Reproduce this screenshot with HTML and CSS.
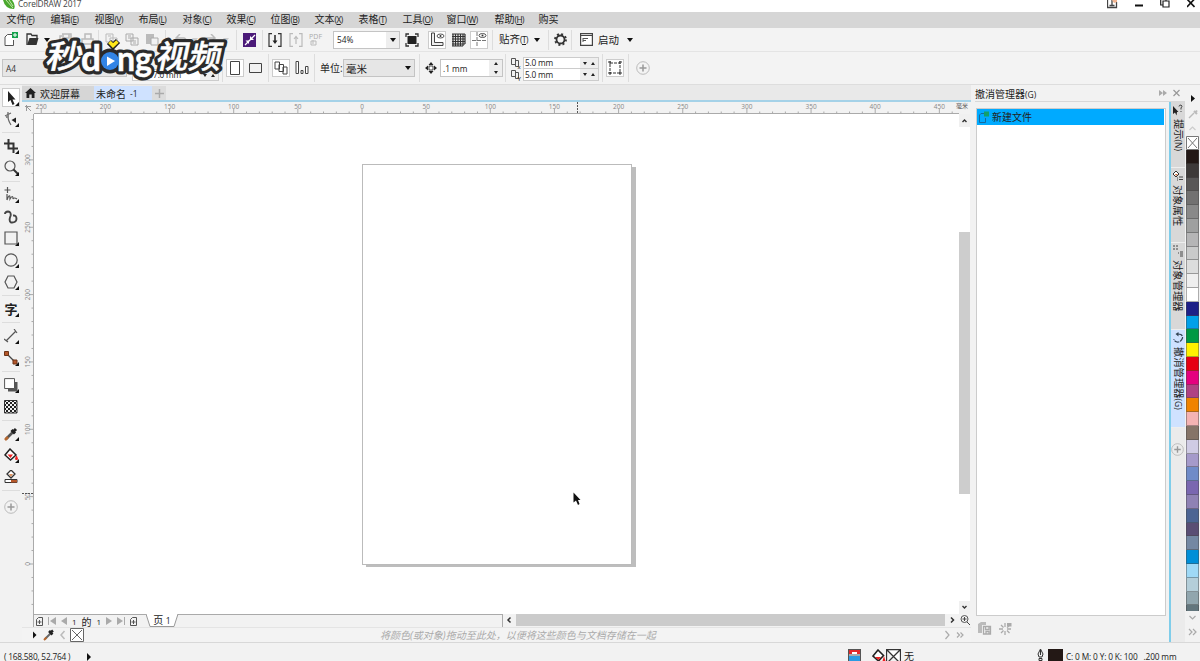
FILE: index.html
```
<!DOCTYPE html>
<html lang="zh-CN">
<head>
  <meta charset="UTF-8">
  <meta name="viewport" content="width=device-width, initial-scale=1.0">
  <title>CorelDRAW 2017</title>
  <link rel="stylesheet" href="styles.css">
</head>
<body>
  <div id="app">
    <header class="titlebar">
      <svg class="leaf" width="13" height="10" viewBox="0 0 13 10"><path d="M1 0H10Q14 5 12 9Q3 9 1 0Z" fill="#4aa82e"/><path d="M4 0L11 8M7 0L11 6" stroke="#c5e6a8" fill="none"/></svg>
      <span>CorelDRAW 2017</span>
      <div class="winbtns">
        <svg width="11" height="9" viewBox="0 0 11 9"><path d="M.5 0V7.5H9.5V2M5 0V5M2.5 5.5H7.5" fill="none" stroke="#444" stroke-width="1.3"/><path d="M5 0H10V2L7 3Z" fill="#f2b48f"/></svg>
        <svg width="8" height="9" viewBox="0 0 8 9"><path d="M0 5.5H8" stroke="#111" stroke-width="2"/></svg>
        <svg width="10" height="9" viewBox="0 0 10 9"><path d="M3 1H9V7H3ZM3 5H.7V0M6 1V0" fill="none" stroke="#222" stroke-width="1.2"/></svg>
        <svg width="8" height="9" viewBox="0 0 8 9"><path d="M0 7L7.5 -1M0 -1L7.5 7" stroke="#111" stroke-width="1.6"/></svg>
      </div>
    </header>

    <nav class="menubar">
      <a>文件<i>(<u>F</u>)</i></a><a>编辑<i>(<u>E</u>)</i></a><a>视图<i>(<u>V</u>)</i></a><a>布局<i>(<u>L</u>)</i></a><a>对象<i>(<u>C</u>)</i></a><a>效果<i>(<u>C</u>)</i></a><a>位图<i>(<u>B</u>)</i></a><a>文本<i>(<u>X</u>)</i></a><a>表格<i>(<u>T</u>)</i></a><a>工具<i>(<u>O</u>)</i></a><a class="wide">窗口<i>(<u>W</u>)</i></a><a>帮助<i>(<u>H</u>)</i></a><a>购买</a>
    </nav>

    <div class="toolbar standard">
      <svg width="15" height="15" viewBox="0 0 15 15"><path d="M8 2.5H3.5L1 5V13.5H9.5V8" fill="#fff" stroke="#555"/><path d="M8 0H14V6H8Z" fill="#13a04b"/><path d="M11 1V5M9 3H13" stroke="#fff"/></svg>
      <svg width="13" height="13" viewBox="0 0 13 13"><path d="M1 12V1H5L6 2.5H11V5" fill="none" stroke="#333" stroke-width="1.3"/><path d="M1 12L3.5 5H12.5L10.5 12Z" fill="#333"/></svg>
      <b class="caret"></b>
      <svg width="13" height="13" viewBox="0 0 13 13"><path d="M3 1H12V10H1V3H3M4 1V5H10V1" fill="none" stroke="#bbb" stroke-width="1.5"/></svg>
      <svg width="13" height="13" viewBox="0 0 13 13"><path d="M4 6V1H10V6M1 11V6H12V11Z" fill="none" stroke="#bbb" stroke-width="1.5"/></svg>
      <em class="sep"></em>
      <svg width="13" height="13" viewBox="0 0 13 13"><path d="M1 1H8V9H1ZM5 5H12V12H5Z" fill="#f2f2f2" stroke="#bbb"/><path d="M3 3H6M7 8H10" stroke="#bbb"/></svg>
      <svg width="14" height="13" viewBox="0 0 14 13"><path d="M1 1H8V8H1ZM6 5H13V12H6Z" fill="#f2f2f2" stroke="#aaa"/><path d="M3 3H6M3 5H6M8 8H11M8 10H11" stroke="#aaa"/></svg>
      <svg width="14" height="13" viewBox="0 0 14 13"><path d="M1 1H9V11H1Z" fill="#bbb"/><path d="M6 5H13V12H6Z" fill="#f2f2f2" stroke="#aaa"/></svg>
      <em class="sep"></em>
      <svg width="13" height="11" viewBox="0 0 13 11"><path d="M5 0L1 4L5 7M1 4H9Q12 5 11 10" fill="none" stroke="#bbb" stroke-width="1.5"/></svg>
      <b class="caret light"></b>
      <svg width="13" height="11" viewBox="0 0 13 11"><path d="M8 0L12 4L8 7M12 4H4Q1 5 2 10" fill="none" stroke="#bbb" stroke-width="1.5"/></svg>
      <b class="caret light"></b>
      <em class="sep"></em>
      <svg width="13" height="14" viewBox="0 0 13 14"><path d="M0 0H13V14H0Z" fill="#4b1a78"/><path d="M2 12L12 2" stroke="#fff" stroke-width="1.3"/><path d="M7 3V7H11ZM6 7.500H2.500L6 11Z" fill="#fff"/></svg>
      <em class="sep"></em>
      <svg width="14" height="14" viewBox="0 0 14 14"><path d="M4 .7H1V13.300H4M10 .7H13V13.300H10" fill="none" stroke="#333" stroke-width="1.200"/><path d="M7 2V9" stroke="#222" stroke-width="1.500"/><path d="M4.500 7.500H9.500L7 11Z" fill="#222"/></svg>
      <svg width="14" height="14" viewBox="0 0 14 14"><path d="M4 .7H1V13.300H4M10 .7H13V13.300H10M7 11V4M5 6L7 3.500L9 6" fill="none" stroke="#bbb" stroke-width="1.200"/></svg>
      <svg width="14" height="15" viewBox="0 0 14 15"><text x="0" y="7" font-size="7" fill="#aaa" textLength="13">PDF</text><path d="M2 9H7V13H2ZM4 8V12" fill="none" stroke="#bbb"/></svg>
      <div class="combo zoom"><span>54%</span><b class="caret"></b></div>
      <svg width="14" height="14" viewBox="0 0 14 14"><path d="M2.500 3H11.500V11H2.500Z" fill="#222"/><path d="M1 4V1H4M10 1H13V4M13 10V13H10M4 13H1V10" fill="none" stroke="#333" stroke-width="1.300"/></svg>
      <div class="btn"><svg width="15" height="15" viewBox="0 0 15 15"><path d="M1.500 1H4.500V10.500H13V13.500H1.500Z" fill="#eee" stroke="#444"/><ellipse cx="10.500" cy="4" rx="3.500" ry="2" fill="none" stroke="#555"/><circle cx="10.500" cy="4" r="1" fill="#333"/></svg></div>
      <svg width="14" height="14" viewBox="0 0 14 14"><path d="M0 1H13M0 3.500H13M0 6H13M0 8.500H13M0 11H13M0 13H11M1 1V13M3.500 1V13M6 1V13M8.500 1V13M11 1V13M13 1V11" stroke="#333" stroke-width="1.200"/></svg>
      <div class="btn"><svg width="15" height="15" viewBox="0 0 15 15"><path d="M5 0V15M0 8.500H14" stroke="#777" stroke-dasharray="4 1"/><ellipse cx="10.500" cy="3.500" rx="3.500" ry="2" fill="none" stroke="#555"/><circle cx="10.500" cy="3.500" r="1" fill="#333"/></svg></div>
      <em class="sep"></em>
      <span class="label">贴齐<i>(<u>T</u>)</i></span>
      <b class="caret"></b>
      <em class="sep"></em>
      <svg width="13" height="13" viewBox="0 0 13 13"><circle cx="6.500" cy="6.500" r="4" fill="none" stroke="#333" stroke-width="1.800"/><circle cx="6.500" cy="6.500" r="5.500" fill="none" stroke="#333" stroke-width="1.800" stroke-dasharray="2 2.320"/></svg>
      <em class="sep"></em>
      <svg width="13" height="13" viewBox="0 0 13 13"><path d="M.6 .6H12.400V12.400H.6Z" fill="#fff" stroke="#444" stroke-width="1.200"/><path d="M1 2.500H12" stroke="#444"/><path d="M3 5.500H8M3 7.500H6M3 5V9" stroke="#555"/></svg>
      <span class="label">启动</span>
      <b class="caret"></b>
    </div>

    <div class="toolbar property">
      <div class="combo paper"><span>A4</span></div>
      <div class="size"><div class="field"><span>297.0 mm</span><b class="spin"></b></div></div>
      <em class="sep"></em>
      <div class="btn"><svg width="10" height="14" viewBox="0 0 10 14"><path d="M.5 .5H9.500V13.500H.5Z" fill="#fff" stroke="#444"/></svg></div>
      <svg width="13" height="10" viewBox="0 0 13 10"><path d="M.5 .5H12.500V9.500H.5Z" fill="#f2f2f2" stroke="#444"/></svg>
      <em class="sep"></em>
      <div class="btn"><svg width="14" height="14" viewBox="0 0 14 14"><path d="M1 1H5.500V8H1ZM5 3.500H9.500V10.500H5ZM9 6H13V13H9Z" fill="#fff" stroke="#444"/></svg></div>
      <svg width="14" height="14" viewBox="0 0 14 14"><path d="M1 .5H3.500V12.500H1ZM6 9.500H8V12.500H6ZM10.500 5.500H13V12.500H10.500Z" fill="#fff" stroke="#444"/></svg>
      <em class="sep"></em>
      <span class="label">单位:</span>
      <div class="combo unit"><span>毫米</span><b class="caret"></b></div>
      <em class="sep"></em>
      <svg width="12" height="12" viewBox="0 0 12 12"><path d="M6 0L8.500 3H3.500ZM6 12L8.500 9H3.500ZM0 6L3 3.500V8.500ZM12 6L9 3.500V8.500Z" fill="#222"/><path d="M4 4H8V8H4Z" fill="#fff" stroke="#444"/></svg>
      <div class="combo nudge"><span>.1 mm</span><b class="updown"></b></div>
      <em class="sep"></em>
      <div class="dup">
        <svg width="11" height="11" viewBox="0 0 11 11"><path d="M.5 .5H4.500V6.500H.5ZM4.500 2.500H7.500V8.500H4.500Z" fill="#f2f2f2" stroke="#555"/><text x="6.500" y="10.500" font-size="6">x</text></svg>
        <svg width="11" height="11" viewBox="0 0 11 11"><path d="M.5 .5H4.500V6.500H.5ZM4.500 2.500H7.500V8.500H4.500Z" fill="#f2f2f2" stroke="#555"/><text x="6.500" y="10.500" font-size="6">Y</text></svg>
      </div>
      <div class="pair">
        <div class="field"><span>5.0 mm</span><b class="spin"></b></div>
        <div class="field"><span>5.0 mm</span><b class="spin"></b></div>
      </div>
      <em class="sep"></em>
      <div class="btn"><svg width="14" height="14" viewBox="0 0 14 14"><path d="M2 2H12V12H2Z" fill="none" stroke="#333" stroke-dasharray="3 1"/><path d="M0 1H3M11 1H14M0 12H3M11 12H14M2 0V3M12 0V3M2 11V14M12 11V14" stroke="#333"/></svg></div>
      <em class="sep"></em>
      <svg width="14" height="14" viewBox="0 0 14 14"><circle cx="7" cy="7" r="6.300" fill="none" stroke="#bbb"/><path d="M7 3.500V10.500M3.500 7H10.500" stroke="#999" stroke-width="1.500"/></svg>
    </div>

    <main class="workspace">
      <aside class="toolbox">
        <div class="tool fly current"><svg width="14" height="16" viewBox="0 0 14 16"><path d="M4 1V12L6.500 10L8.500 15L10.500 14L8.500 9.500H11.500Z" fill="#222"/></svg></div>
        <div class="tool fly"><svg width="14" height="16" viewBox="0 0 14 16"><path d="M4 1Q3 8 7 14M1 5L7 2" fill="none" stroke="#666" stroke-width="1.200"/><path d="M2 4H5V7H2Z" fill="#888"/><path d="M7.500 9L12 6.500V12Z" fill="#222"/></svg></div>
        <em></em>
        <div class="tool fly"><svg width="14" height="14" viewBox="0 0 14 14"><path d="M4.500 0V9.500H14M0 4.500H9.500V14" fill="none" stroke="#333" stroke-width="2"/></svg></div>
        <div class="tool fly"><svg width="15" height="15" viewBox="0 0 15 15"><circle cx="6" cy="6" r="5" fill="none" stroke="#555" stroke-width="1.200"/><path d="M9.500 9.500L14 14" stroke="#333" stroke-width="2"/></svg></div>
        <em></em>
        <div class="tool fly"><svg width="14" height="15" viewBox="0 0 14 15"><path d="M3.500 0V6M.5 3H6.500M3 7V13M3 13Q6 5 6 12Q9 7 9 12Q10 10 13 12" fill="none" stroke="#555" stroke-width="1.200"/></svg></div>
        <div class="tool"><svg width="14" height="14" viewBox="0 0 14 14"><path d="M1 4Q1 1.500 4 1.500Q7.500 2 6.500 6Q4.500 11 7 12.500Q12 13 12.500 9Q12.500 5 9 5.500" fill="none" stroke="#444" stroke-width="1.900"/></svg></div>
        <div class="tool fly"><svg width="14" height="14" viewBox="0 0 14 14"><path d="M1 1H13V13H1Z" fill="none" stroke="#555" stroke-width="1.200"/></svg></div>
        <div class="tool fly"><svg width="14" height="14" viewBox="0 0 14 14"><circle cx="7" cy="7" r="6.200" fill="none" stroke="#555" stroke-width="1.200"/></svg></div>
        <div class="tool fly"><svg width="14" height="14" viewBox="0 0 14 14"><path d="M4 1H10L13 7L10 13H4L1 7Z" fill="none" stroke="#555" stroke-width="1.200"/></svg></div>
        <em></em>
        <div class="tool fly zi">字</div>
        <em></em>
        <div class="tool fly"><svg width="14" height="14" viewBox="0 0 14 14"><path d="M2 12L12 2M0 10L4 13M10 0L13 4" stroke="#555" stroke-width="1.200"/></svg></div>
        <div class="tool fly"><svg width="14" height="14" viewBox="0 0 14 14"><path d="M3 3L11 11" stroke="#444" stroke-width="1.200"/><path d="M.5 .5H4.500V4.500H.5ZM9 9H13V13H9Z" fill="#b5572a" stroke="#6c3518"/></svg></div>
        <em></em>
        <div class="tool fly"><svg width="14" height="14" viewBox="0 0 14 14"><path d="M4 4H13.500V13.500H4Z" fill="#555"/><path d="M.6 .6H10.500V10.500H.6Z" fill="#fff" stroke="#555"/></svg></div>
        <div class="tool"><svg width="14" height="14" viewBox="0 0 14 14"><defs><pattern id="chk" width="4" height="4" patternUnits="userSpaceOnUse"><path d="M0 0H2V2H0ZM2 2H4V4H2Z" fill="#222"/></pattern></defs><path d="M.5 .5H13V13H.5Z" fill="url(#chk)" stroke="#333"/></svg></div>
        <em></em>
        <div class="tool fly"><svg width="14" height="14" viewBox="0 0 14 14"><path d="M9 5L2 12" stroke="#555" stroke-width="2.600"/><path d="M4 10L1 13" stroke="#b5672f" stroke-width="2.600"/><path d="M7.500 3L11 6.500M9 5L12 2" stroke="#222" stroke-width="3"/></svg></div>
        <div class="tool fly"><svg width="14" height="14" viewBox="0 0 14 14"><path d="M6 1L12 7L6.500 12L1 7Z" fill="#fff" stroke="#222" stroke-width="1.500"/><path d="M3.500 6.500H9L6.500 10Z" fill="#e22"/><path d="M12.500 8Q14.500 12 12.500 12Q10.500 12 12.500 8Z" fill="#e22" stroke="#e22"/></svg></div>
        <div class="tool"><svg width="14" height="14" viewBox="0 0 14 14"><path d="M7 0L11 4L7 8L3 4Z" fill="#fff" stroke="#333" stroke-width="1.300"/><path d="M5 4H9L7 7Z" fill="#d98f5c"/><path d="M1 9.500H13V12.500H1Z" fill="#fff" stroke="#333"/><path d="M7 10H13V12.500H7Z" fill="#b5572a"/></svg></div>
        <em></em>
        <div class="tool last"><svg width="14" height="14" viewBox="0 0 14 14"><circle cx="7" cy="7" r="6.300" fill="none" stroke="#bbb"/><path d="M7 3.500V10.500M3.500 7H10.500" stroke="#999" stroke-width="1.500"/></svg></div>
      </aside>

      <section class="document">
        <div class="doctabs">
          <div class="doctab"><svg width="11" height="10" viewBox="0 0 11 10"><path d="M5.500 0L11 5H9.500V10H6.700V6.500H4.300V10H1.500V5H0Z" fill="#222"/></svg>欢迎屏幕</div>
          <div class="doctab active">未命名 <small>-1</small></div>
          <div class="doctab add"><svg width="9" height="9" viewBox="0 0 9 9"><path d="M4.500 0V9M0 4.500H9" stroke="#aaa" stroke-width="1.500"/></svg></div>
        </div>
        <div class="ruler-row">
          <svg width="12" height="12" viewBox="0 0 12 12"><path d="M3 4.500H9M4.500 3V9M5 5L9 9" fill="none" stroke="#999"/></svg>
          <svg id="hruler" width="925" height="12"></svg>
          <span>毫米</span>
        </div>
        <div class="view">
          <svg id="vruler" width="12" height="500"></svg>
          <div class="canvas">
            <div class="page"></div>
            <svg class="cursor" width="8" height="14" viewBox="0 0 8 14"><path d="M.5 .5V10.500L3 8.500L5 13L6.500 12L5 8H7.500Z" fill="#111"/></svg>
          </div>
          <div class="vscroll">
            <svg width="11" height="13" viewBox="0 0 11 13"><path d="M3.500 8L5.500 6L7.500 8" fill="none" stroke="#333" stroke-width="1.400"/></svg>
            <div class="thumb"></div>
            <svg width="11" height="13" viewBox="0 0 11 13"><path d="M3.500 5L5.500 7L7.500 5" fill="none" stroke="#333" stroke-width="1.400"/></svg>
          </div>
        </div>
        <div class="pagebar">
          <div class="pagenav">
            <svg width="7" height="9" viewBox="0 0 7 9"><path d="M2.500 .5H6.500V8.500H.5V2.500ZM3.500 3V7M1.500 5H5.500" fill="none" stroke="#555"/></svg>
            <svg width="8" height="8" viewBox="0 0 8 8"><path d="M.5 0V8" stroke="#aaa"/><path d="M8 0V8L2 4Z" fill="#aaa"/></svg>
            <svg width="6" height="8" viewBox="0 0 6 8"><path d="M6 0V8L0 4Z" fill="#aaa"/></svg>
            <span>1</span><span class="of">的</span><span>1</span>
            <svg width="6" height="8" viewBox="0 0 6 8"><path d="M0 0V8L6 4Z" fill="#aaa"/></svg>
            <svg width="8" height="8" viewBox="0 0 8 8"><path d="M7.500 0V8" stroke="#aaa"/><path d="M0 0V8L6 4Z" fill="#aaa"/></svg>
            <svg width="7" height="9" viewBox="0 0 7 9"><path d="M2.500 .5H6.500V8.500H.5V2.500ZM3.500 3V7M1.500 5H5.500" fill="none" stroke="#555"/></svg>
          </div>
          <div class="pagetab">
            <svg width="34" height="14" viewBox="0 0 34 14"><path d="M0 0L4 12.500H28L32 0" fill="#fff" stroke="#999"/></svg>
            <span>页 <small>1</small></span>
          </div>
          <div class="hscroll">
            <svg width="13" height="12" viewBox="0 0 13 12"><path d="M7.500 3.500L5 6L7.500 8.500" fill="none" stroke="#333" stroke-width="1.500"/></svg>
            <div class="thumb"></div>
            <svg width="14" height="12" viewBox="0 0 14 12"><path d="M6 3.500L8.500 6L6 8.500" fill="none" stroke="#333" stroke-width="1.500"/></svg>
            <svg width="12" height="12" viewBox="0 0 12 12"><circle cx="5.500" cy="5" r="3.500" fill="none" stroke="#555"/><path d="M5.500 3V7M3.500 5H7.500M8 8L11 11" stroke="#444"/></svg>
          </div>
        </div>
        <div class="docpalette">
          <svg width="37" height="14" viewBox="0 0 37 14"><path d="M0 3.500L3.500 7L0 10.500Z" fill="#111"/><path d="M18 5L12 11" stroke="#666" stroke-width="2"/><path d="M13.500 9.500L11 12" stroke="#b5672f" stroke-width="2"/><path d="M16 3L19.500 6.500M17 5L20 2.500" stroke="#222" stroke-width="2.500"/><path d="M31.500 3L28 7L31.500 11" fill="none" stroke="#bbb" stroke-width="1.500"/></svg>
          <svg class="none" width="14" height="14" viewBox="0 0 14 14"><path d="M.5 .5H13.500V13.500H.5ZM2 2L12 12M12 2L2 12" fill="#fff" stroke="#666"/></svg>
          <p>将颜色(或对象)拖动至此处，以便将这些颜色与文档存储在一起</p>
          <svg width="20" height="10" viewBox="0 0 20 10"><path d="M1.500 1L5 5L1.500 9M13 2.500L15.500 5L13 7.500M16.500 2.500L19 5L16.500 7.500" fill="none" stroke="#aaa" stroke-width="1.200"/></svg>
        </div>
      </section>

      <section class="docker">
        <div class="docker-head">
          <span>撤消管理器<small>(G)</small></span>
          <svg width="22" height="8" viewBox="0 0 22 8"><path d="M0 1L4 4L0 7ZM4 1L8 4L4 7Z" fill="#aaa"/><path d="M14.500 1L20.500 7M20.500 1L14.500 7" stroke="#999" stroke-width="1.200"/></svg>
        </div>
        <div class="history">
          <div class="entry"><svg width="12" height="12" viewBox="0 0 12 12"><path d="M6 2.500H3L1.500 4V11.500H7.500V7" fill="none" stroke="#18699c"/><path d="M6 .5H11V5.500H6Z" fill="#13a06b"/></svg>新建文件</div>
        </div>
        <div class="docker-foot">
          <svg width="14" height="13" viewBox="0 0 14 13"><path d="M0 2L3 0H8V3H4V11H0Z" fill="#bbb"/><path d="M5.500 4.500H12.500V12H5.500ZM7.500 5V7.500H11V5M8 12V9.500H11V12" fill="#f2f2f2" stroke="#aaa" stroke-width="1.300"/></svg>
          <svg width="14" height="14" viewBox="0 0 14 14"><path d="M6 1V5M6 9V13M0 7H4M8 7H12M2 3L4.500 5.500M2 11L4.500 8.500M8 8.500L10.500 11M8 5.500L10 4" stroke="#aaa" stroke-width="1.300"/><path d="M8 1H12.500V4.500H8Z" fill="#aaa"/></svg>
        </div>
      </section>

      <nav class="sidetabs">
        <div class="sidetab t1"><svg width="12" height="12" viewBox="0 0 12 12"><path d="M1 2V10L3 8.500L4.500 11.500L5 8H6.500Z" fill="#222"/><path d="M7 2.500Q7 1 9 1Q11 2 9 4V5.500M9 7V8" fill="none" stroke="#444"/></svg><span>提示<small>(N)</small></span></div>
        <div class="sidetab t2"><svg width="12" height="12" viewBox="0 0 12 12"><path d="M4 1L7 4L4 7L1 4Z" fill="#fff" stroke="#333"/><path d="M3 4H6L4 6Z" fill="#c96a3a"/><path d="M5 8H6M7 7H11M5 10H6M7 9.500H11" stroke="#444"/></svg><span>对象属性</span></div>
        <div class="sidetab t3"><svg width="12" height="12" viewBox="0 0 12 12"><path d="M1 1H3M4 1H6M1 4H3M4 4H6M6 8H7M8 7H11M8 9H11M8 11H11" stroke="#444" stroke-width="1.200"/></svg><span>对象管理器</span></div>
        <div class="sidetab t4"><svg width="12" height="12" viewBox="0 0 12 12"><path d="M6 2Q11 2 10.500 6Q9 10.500 5 10Q2 9 2 7" fill="none" stroke="#345" stroke-width="1.200" stroke-dasharray="5 1"/><path d="M6.500 0V4.500L3.500 2Z" fill="#345"/></svg><span>撤消管理器<small>(G)</small></span></div>
        <svg class="more" width="13" height="13" viewBox="0 0 14 14"><circle cx="7" cy="7" r="6.300" fill="none" stroke="#bbb"/><path d="M7 3.500V10.500M3.500 7H10.500" stroke="#999" stroke-width="1.500"/></svg>
      </nav>

      <aside class="palette">
        <svg width="13" height="43" viewBox="0 0 13 43"><path d="M5 2L9 5.500L5 9Z" fill="#111"/><path d="M3 25L8 20" stroke="#bbb" stroke-width="1.500"/><path d="M8 18L11 21M9 20L11 17.500" stroke="#bbb" stroke-width="2"/><path d="M3.500 37L6.500 34L9.500 37" fill="none" stroke="#ccc" stroke-width="1.200"/></svg>
        <svg width="13" height="14" viewBox="0 0 13 14"><path d="M.5 .5H12.500V13.500H.5ZM2 2L11 12M11 2L2 12" fill="#fff" stroke="#777"/></svg>
        <div id="swatches"></div>
        <svg width="13" height="26" viewBox="0 0 13 26"><path d="M3.500 5L6.500 8L9.500 5M3 18L6 21L3 24M7 18L10 21L7 24" fill="none" stroke="#aaa" stroke-width="1.200"/></svg>
      </aside>
    </main>

    <footer class="statusbar">
      <span class="coords">( 168.580, 52.764 )</span>
      <b class="play"></b>
      <div class="fillinfo">
        <svg width="13" height="12" viewBox="0 0 13 12"><path d="M0 0H13V12H0Z" fill="#555"/><path d="M1 1H12V5H1Z" fill="#e22b2b"/><path d="M1 7H12V12H1Z" fill="#2b9be2"/><path d="M4 3H9V5H4ZM1 5.500H12V6.500H1Z" fill="#fff"/></svg>
        <svg width="14" height="13" viewBox="0 0 14 13"><path d="M6 1L11.500 6.500L6.500 12L1 7Z" fill="#fff" stroke="#222" stroke-width="1.600"/><path d="M3 8H9L6.500 11ZM12 7L13.500 12H10.500Z" fill="#e22"/></svg>
        <svg width="15" height="14" viewBox="0 0 15 14"><path d="M.5 .5H14.500V14M.5 0V14M1 1L14 14M14 1L1 14" fill="#fff" stroke="#333" stroke-width="1.300"/></svg>
        <span>无</span>
      </div>
      <div class="outlineinfo">
        <svg width="7" height="12" viewBox="0 0 7 12"><path d="M3.500 0L6 5L5 8H2L1 5ZM2 9.500H5V11.500H2Z" fill="#eee" stroke="#333"/><path d="M3.500 1V6" stroke="#333"/></svg>
        <i class="ink"></i>
        <span>C: 0 M: 0 Y: 0 K: 100&nbsp; &nbsp;.200 mm</span>
      </div>
    </footer>

    <svg class="watermark" width="190" height="52" viewBox="0 0 190 52">
      <defs>
        <g id="brand">
          <g class="han" transform="skewX(-12)">
            <text x="12" y="34" font-size="32" textLength="36" lengthAdjust="spacingAndGlyphs">秒</text>
            <text x="122" y="34" font-size="32" textLength="65" lengthAdjust="spacingAndGlyphs">视频</text>
          </g>
          <g class="lat">
            <text x="41" y="37" font-size="37" textLength="20" lengthAdjust="spacingAndGlyphs">d</text>
            <text x="77" y="37" font-size="34" textLength="35" lengthAdjust="spacingAndGlyphs">ng</text>
          </g>
        </g>
      </defs>
      <g class="edge"><use href="#brand"/><circle cx="70" cy="27" r="9"/></g>
      <g class="face"><use href="#brand"/></g>
      <circle cx="70" cy="27" r="9" fill="#3285e6"/>
      <path d="M67 22.500V32L75 27Z" fill="#fff"/>
      <path d="M69 8L73 12L78 7" fill="none" stroke="#222" stroke-width="6"/>
      <path d="M69.500 8L73 11.500L77.500 7.500" fill="none" stroke="#ffe81a" stroke-width="3.500"/>
    </svg>
  </div>

  <script>
    const hruler = document.getElementById("hruler")
    const vruler = document.getElementById("vruler")
    const swatches = document.getElementById("swatches")
    const colors = [
      "#231815", "#3e3a39", "#595757", "#727171", "#898989", "#9fa0a0", "#b5b5b6", "#c9caca", "#dcdddd", "#efefef", "#ffffff",
      "#1d2088", "#00a0e9", "#009944", "#fff100", "#e60012", "#e4007f", "#af4283", "#f08300", "#f4b3b3", "#867468",
      "#cfcbe4", "#a59aca", "#6f8bc8", "#7a67b0", "#8f82b4", "#4c6493", "#5a4e74", "#7488a3", "#008fd8", "#9fd9f6",
      "#b4ced9", "#91a6ae", "#63767d"
    ]

    // horizontal: 0 mm sits at 328px, 50 mm every 64.15px
    let h = '<path class="base" d="M0 11.5H925"/>'
    for (let mm = -250; mm <= 460; mm += 10) {
      const x = 328 + mm * 1.283
      const major = mm % 50 === 0
      h += `<path d="M${x} ${major ? 7 : 9.5}V12"/>`
      if (major) {
        h += `<text x="${x}" y="7">${Math.abs(mm)}</text>`
      }
    }
    h += '<path class="mark" d="M543.5 0V12"/>'
    hruler.innerHTML = h

    // vertical: 0 mm sits at 450px, counting upwards
    let v = '<path class="base" d="M11.5 0V500"/>'
    for (let mm = -30; mm <= 330; mm += 10) {
      const y = 450 - mm * 1.347
      const major = mm % 50 === 0
      v += `<path d="M${major ? 7 : 9.5} ${y}H12"/>`
      if (major) {
        v += `<text transform="translate(8 ${y}) rotate(-90)">${Math.abs(mm)}</text>`
      }
    }
    v += '<path class="mark" d="M0 379.5H12"/>'
    vruler.innerHTML = v

    colors.forEach(color => {
      const item = document.createElement("div")
      item.style.background = color
      swatches.appendChild(item)
    })
  </script>
</body>
</html>
```
FILE: styles.css
```
* {
  margin: 0;
  padding: 0;
  box-sizing: border-box;
}
body {
  font-family: "Open Sans", "Noto Sans CJK SC", sans-serif;
  font-size: 10px;
  color: #222;
  overflow: hidden;
}
svg {
  display: block;
  flex: none;
}
i, em {
  font-style: normal;
}
#app {
  position: relative;
  width: 1200px;
  height: 661px;
  display: flex;
  flex-direction: column;
  background: #f2f2f2;
  overflow: hidden;
  white-space: nowrap;
}
.titlebar {
  height: 12px;
  flex: none;
  display: flex;
  padding-left: 3px;
  background: #fff;
  font-size: 8.3px;
  line-height: 7px;
  color: #444;
}
.titlebar .leaf {
  margin-left: -1px;
  margin-right: 3px;
}
.titlebar span {
  letter-spacing: -0.15px;
}
.winbtns {
  margin-left: auto;
  margin-right: 5px;
  display: flex;
  gap: 17px;
}
.menubar {
  height: 16px;
  flex: none;
  display: flex;
  padding-left: 6.5px;
  background: #d6d6d6;
  line-height: 15px;
}
.menubar a {
  width: 44px;
}
.menubar .wide {
  width: 48px;
}
.menubar i, .label i {
  font-size: 8.3px;
  letter-spacing: -0.5px;
}
.toolbar {
  flex: none;
  display: grid;
  align-items: center;
  justify-items: start;
  background: #f3f3f3;
}
.standard {
  height: 24px;
  padding-left: 4px;
  border-bottom: 1px solid #e4e4e4;
  grid-template-columns: 22px 18px 15px 22px 17px 7px 20px 20px 20px 10px 17px 11px 20px 13px 7px 19px 6px 21px 20px 24px 72px 23px 24px 18px 22px 7px 35px 14px 6px 17px 9px 18px 29px 8px;
}
.property {
  height: 33px;
  padding-left: 2px;
  border-bottom: 1px solid #ddd;
  grid-template-columns: 130px 90px 4px 23px 19px 4px 23px 19px 6px 23px 76px 6px 15px 65px 6px 12px 79px 4px 22px 8px 14px;
}
.sep {
  width: 1px;
  height: 20px;
  background: #ddd;
}
.property .sep {
  height: 28px;
}
.label {
  font-size: 10.5px;
  line-height: 16px;
}
.property .label {
  font-size: 10px;
}
.caret {
  border: 3.5px solid transparent;
  border-top: 4px solid #111;
  border-bottom: 0;
}
.caret.light {
  border-top-color: #ccc;
}
.btn {
  width: 18px;
  height: 18px;
  display: flex;
  align-items: center;
  justify-content: center;
  background: #fff;
  border: 1px solid #ccc;
}
.combo {
  height: 18px;
  display: flex;
  align-items: center;
  justify-content: space-between;
  padding: 0 3px;
  background: #e6e6e6;
  border: 1px solid #c4c4c4;
  font-size: 8.3px;
}
.zoom {
  width: 67px;
  background: linear-gradient(to right, #fff 52px, #eee 52px);
}
.paper {
  width: 125px;
  color: #333;
}
.unit {
  width: 72px;
  padding-left: 2px;
  font-size: 10.5px;
}
.nudge {
  width: 63px;
  padding-left: 2px;
  background: linear-gradient(to right, #fff 48px, #eee 48px);
}
.updown {
  display: flex;
  flex-direction: column;
  gap: 6px;
  margin-right: 1px;
}
.updown::before, .updown::after {
  content: "";
  border: 2.5px solid transparent;
  border-bottom: 3px solid #222;
  border-top: 0;
}
.updown::after {
  border-bottom: 0;
  border-top: 3px solid #222;
}
.field {
  width: 76px;
  height: 12px;
  display: flex;
  align-items: center;
  justify-content: space-between;
  padding: 0 3px 0 1px;
  border: 1px solid #ccc;
  background: linear-gradient(to right, #fff 56px, #eee 56px);
  font-size: 8.3px;
  letter-spacing: -0.2px;
  line-height: 10px;
}
.field + .field {
  border-top: 0;
}
.pair, .dup {
  display: flex;
  flex-direction: column;
  padding-top: 2px;
}
.dup {
  gap: 1px;
}
.spin {
  display: flex;
  gap: 4px;
}
.spin::before, .spin::after {
  content: "";
  border: 2.5px solid transparent;
  border-top: 3px solid #222;
  border-bottom: 0;
}
.spin::after {
  border-top: 0;
  border-bottom: 3px solid #222;
}
.size {
  align-self: end;
  padding-bottom: 3px;
}
.size .field {
  width: 87px;
  padding-left: 11px;
  background: linear-gradient(to right, #fff 67px, #eee 67px);
}
.workspace {
  height: 558px;
  flex: none;
  display: flex;
  border-bottom: 1px solid #d8d8d8;
}
.toolbox {
  width: 22px;
  flex: none;
  padding-top: 1px;
  display: flex;
  flex-direction: column;
}
.toolbox em {
  height: 1px;
  margin: 2px 2px;
  background: #ddd;
}
.tool {
  position: relative;
  height: 21.9px;
  display: flex;
  align-items: center;
  justify-content: center;
}
.tool.current {
  background: #fff;
  height: 19px;
  margin: 2px 2px 1px;
  border: 1px solid #ccc;
}
.tool.last {
  height: 27px;
}
.fly::after {
  content: "";
  position: absolute;
  right: 3px;
  bottom: 3px;
  border-left: 4px solid transparent;
  border-bottom: 4px solid #111;
}
.current::after {
  right: 0;
  bottom: 0;
}
.zi {
  font-size: 13px;
  font-weight: bold;
  line-height: 18px;
}
.document {
  width: 949px;
  flex: none;
  display: flex;
  flex-direction: column;
}
.doctabs {
  height: 17px;
  flex: none;
  display: flex;
  padding-top: 1px;
  background: #e9e9e9;
  border-bottom: 2px solid #a5d2e8;
}
.doctab {
  width: 72px;
  display: flex;
  align-items: center;
  gap: 4px;
  padding-left: 3px;
  background: #d6d6d6;
}
.doctab.active {
  width: 58px;
  padding-left: 2px;
  background: #cfe2ff;
}
.doctab.add {
  width: 14px;
  background: #dcdcdc;
}
small {
  font-size: 8.5px;
}
.ruler-row {
  height: 12px;
  flex: none;
  display: flex;
}
.ruler-row span {
  font-size: 6px;
  line-height: 9px;
  margin-left: -3px;
  color: #555;
}
#hruler, #vruler {
  stroke: #aaa;
  font-size: 6.5px;
}
#hruler text, #vruler text {
  stroke: none;
  fill: #888;
  text-anchor: middle;
}
#hruler .base, #vruler .base {
  stroke: #aaa;
}
#hruler .mark, #vruler .mark {
  stroke: #555;
  stroke-dasharray: 2 1;
}
.view {
  height: 500px;
  flex: none;
  display: flex;
}
.canvas {
  position: relative;
  width: 925px;
  background: #fff;
  padding: 50px 0 0 328px;
}
.page {
  width: 270px;
  height: 401px;
  background: #fff;
  border: 1px solid #bbb;
  box-shadow: 4px 3px 0 #bdbdbd;
  clip-path: polygon(0 0, 270px 0, 270px 3px, 274px 3px, 274px 403px, 4px 403px, 4px 401px, 0 401px);
}
.cursor {
  position: absolute;
  left: 539px;
  top: 378px;
}
.vscroll {
  width: 11px;
  display: flex;
  flex-direction: column;
  background: #fff;
}
.vscroll svg {
  background: #f0f0f0;
}
.vscroll .thumb {
  height: 262px;
  margin: 105px 0 107px;
  background: #cdcdcd;
}
.pagebar {
  height: 13px;
  flex: none;
  display: flex;
  padding-left: 11px;
}
.pagenav {
  width: 112px;
  display: flex;
  align-items: center;
  gap: 5px;
  padding-left: 2px;
  border-top: 1px solid #aaa;
  border-left: 1px solid #aaa;
  font-size: 8px;
}
.pagenav .of {
  font-size: 10px;
}
.pagetab {
  position: relative;
  width: 358px;
  border-top: 1px solid #aaa;
  border-right: 1px solid #aaa;
}
.pagetab svg {
  margin-top: -1px;
  margin-left: 1px;
}
.pagetab span {
  position: absolute;
  left: 5px;
  width: 24px;
  text-align: center;
  top: -1px;
  line-height: 13px;
}
.hscroll {
  flex: 1;
  display: flex;
}
.hscroll .thumb {
  flex: 1;
  height: 12px;
  background: #cbcbcb;
}
.docpalette {
  flex: 1;
  display: flex;
  align-items: center;
  padding: 0 7px 0 11px;
  border-top: 1px solid #e4e4e4;
  background: #f3f3f3;
}
.docpalette .none {
  margin-right: 296px;
}
.docpalette p {
  flex: 1;
  color: #aaa;
  font-style: italic;
  line-height: 14px;
}
.docker {
  width: 198px;
  flex: none;
  padding-left: 4px;
  display: flex;
  flex-direction: column;
}
.docker-head {
  height: 17px;
  display: flex;
  align-items: center;
  justify-content: space-between;
  padding-right: 4px;
  border-bottom: 1px solid #d8d8d8;
  margin-right: -16px;
}
.history {
  height: 508px;
  width: 190px;
  margin: 6px 0 0 1px;
  background: #fff;
  border: 1px solid #ccc;
}
.entry {
  width: 187px;
  height: 16px;
  display: flex;
  align-items: center;
  gap: 2px;
  padding-left: 1px;
  background: #00aaff;
  line-height: 14px;
}
.docker-foot {
  display: flex;
  gap: 7px;
  padding: 6px 0 0 3px;
}
.sidetabs {
  width: 16px;
  flex: none;
  margin-top: 17px;
  border-left: 2px solid #7fcdea;
  background: #ebebeb;
}
.sidetab {
  display: flex;
  align-items: center;
  gap: 3px;
  padding-top: 2px;
  writing-mode: vertical-rl;
  text-orientation: sideways;
  width: 14px;
  font-size: 10.3px;
  background: #d8d8d8;
  border-bottom: 1px solid #eee;
}
.sidetab span {
  line-height: 12px;
}
.t1 {
  height: 66px;
}
.t2 {
  height: 75px;
}
.t3 {
  height: 87px;
}
.t4 {
  height: 98px;
  background: #cfe2ff;
}
.more {
  margin-top: 15px;
}
.palette {
  width: 14px;
  margin-left: 1px;
  flex: none;
  padding-top: 8px;
}
#swatches {
  height: 461px;
  width: 13px;
  overflow: hidden;
}
#swatches div {
  height: 13.8px;
  border: 1px solid rgba(70, 70, 70, 0.45);
  border-top: 0;
}
.statusbar {
  height: 18px;
  flex: none;
  display: flex;
  align-items: flex-start;
  padding-top: 6px;
  padding-left: 4px;
  font-size: 8.3px;
}
.coords {
  width: 83px;
  line-height: 16px;
  letter-spacing: -0.2px;
}
.play {
  margin-top: 4px;
  border: 4px solid transparent;
  border-left: 4px solid #111;
  border-right: 0;
}
.fillinfo {
  display: flex;
  margin-left: 757px;
  width: 189px;
}
.fillinfo svg:nth-child(2) {
  margin-left: 11px;
}
.fillinfo span {
  font-size: 10px;
  line-height: 14px;
  margin-left: 3px;
}
.outlineinfo {
  display: flex;
  line-height: 16px;
  letter-spacing: -0.15px;
}
.ink {
  width: 15px;
  height: 13px;
  margin: 0 3px 0 4px;
  background: #231815;
}
.watermark {
  position: absolute;
  left: 40px;
  top: 34px;
}
.han {
  font-family: "Noto Sans CJK SC", sans-serif;
  font-weight: 500;
}
.lat {
  font-family: Lato, sans-serif;
  font-weight: bold;
}
.edge {
  fill: #2b2b2b;
  stroke: #2b2b2b;
  stroke-width: 7;
  stroke-linejoin: round;
}
.face {
  fill: #fff;
  stroke: #fff;
  stroke-width: 0.5;
}
```
